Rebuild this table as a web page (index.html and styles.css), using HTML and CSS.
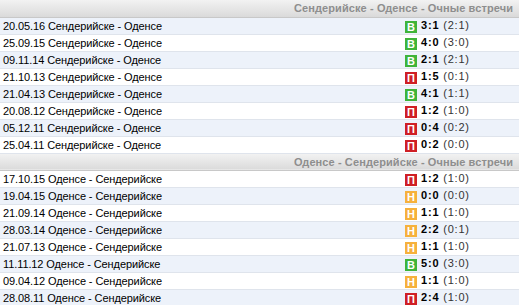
FILE: index.html
```html
<!DOCTYPE html>
<html lang="ru">
<head>
  <meta charset="UTF-8">
  <title>Очные встречи</title>
  <link rel="stylesheet" href="styles.css">
</head>
<body>
  <table class="h2h">
    <colgroup>
      <col class="h2h__col-match">
      <col class="h2h__col-result">
    </colgroup>
    <tr class="h2h__head"><th colspan="2">Сендерийске - Оденсе - Очные встречи</th></tr>
    <tr class="h2h__row is-odd"><td class="h2h__match">20.05.16 Сендерийске - Оденсе</td><td class="h2h__result"><span class="mark mark--win">В</span><b>3:1</b> (2:1)</td></tr>
    <tr class="h2h__row"><td class="h2h__match">25.09.15 Сендерийске - Оденсе</td><td class="h2h__result"><span class="mark mark--win">В</span><b>4:0</b> (3:0)</td></tr>
    <tr class="h2h__row is-odd"><td class="h2h__match">09.11.14 Сендерийске - Оденсе</td><td class="h2h__result"><span class="mark mark--win">В</span><b>2:1</b> (2:1)</td></tr>
    <tr class="h2h__row"><td class="h2h__match">21.10.13 Сендерийске - Оденсе</td><td class="h2h__result"><span class="mark mark--loss">П</span><b>1:5</b> (0:1)</td></tr>
    <tr class="h2h__row is-odd"><td class="h2h__match">21.04.13 Сендерийске - Оденсе</td><td class="h2h__result"><span class="mark mark--win">В</span><b>4:1</b> (1:1)</td></tr>
    <tr class="h2h__row"><td class="h2h__match">20.08.12 Сендерийске - Оденсе</td><td class="h2h__result"><span class="mark mark--loss">П</span><b>1:2</b> (1:0)</td></tr>
    <tr class="h2h__row is-odd"><td class="h2h__match">05.12.11 Сендерийске - Оденсе</td><td class="h2h__result"><span class="mark mark--loss">П</span><b>0:4</b> (0:2)</td></tr>
    <tr class="h2h__row"><td class="h2h__match">25.04.11 Сендерийске - Оденсе</td><td class="h2h__result"><span class="mark mark--loss">П</span><b>0:2</b> (0:0)</td></tr>
    <tr class="h2h__head"><th colspan="2">Оденсе - Сендерийске - Очные встречи</th></tr>
    <tr class="h2h__row"><td class="h2h__match">17.10.15 Оденсе - Сендерийске</td><td class="h2h__result"><span class="mark mark--loss">П</span><b>1:2</b> (1:0)</td></tr>
    <tr class="h2h__row is-odd"><td class="h2h__match">19.04.15 Оденсе - Сендерийске</td><td class="h2h__result"><span class="mark mark--draw">Н</span><b>0:0</b> (0:0)</td></tr>
    <tr class="h2h__row"><td class="h2h__match">21.09.14 Оденсе - Сендерийске</td><td class="h2h__result"><span class="mark mark--draw">Н</span><b>1:1</b> (1:0)</td></tr>
    <tr class="h2h__row is-odd"><td class="h2h__match">28.03.14 Оденсе - Сендерийске</td><td class="h2h__result"><span class="mark mark--draw">Н</span><b>2:2</b> (0:1)</td></tr>
    <tr class="h2h__row"><td class="h2h__match">21.07.13 Оденсе - Сендерийске</td><td class="h2h__result"><span class="mark mark--draw">Н</span><b>1:1</b> (1:0)</td></tr>
    <tr class="h2h__row is-odd"><td class="h2h__match">11.11.12 Оденсе - Сендерийске</td><td class="h2h__result"><span class="mark mark--win">В</span><b>5:0</b> (3:0)</td></tr>
    <tr class="h2h__row"><td class="h2h__match">09.04.12 Оденсе - Сендерийске</td><td class="h2h__result"><span class="mark mark--draw">Н</span><b>1:1</b> (1:0)</td></tr>
    <tr class="h2h__row is-odd"><td class="h2h__match">28.08.11 Оденсе - Сендерийске</td><td class="h2h__result"><span class="mark mark--loss">П</span><b>2:4</b> (1:0)</td></tr>
  </table>
</body>
</html>
```

FILE: styles.css
```css
* {
  box-sizing: border-box;
}

html,
body {
  margin: 0;
  overflow: hidden;
}

body {
  font-family: "Liberation Sans", Arial, sans-serif;
  font-size: 11px;
  color: #000;
  background: #fff;
}

.h2h {
  width: 519px;
  border-collapse: collapse;
  table-layout: fixed;
}

.h2h__col-match {
  width: 405px;
}

.h2h__col-result {
  width: 114px;
}

.h2h__head th {
  height: 17px;
  padding: 0 6px 0 0;
  text-align: right;
  font-size: 11px;
  font-weight: bold;
  letter-spacing: 0.1px;
  color: #8e8e8e;
  background: linear-gradient(#f2f2f2, #dadada);
  border-bottom: 1px solid #c8c8c8;
}

.h2h__row td {
  height: 17px;
  padding: 0;
  border-bottom: 1px solid #dfe4ec;
  white-space: nowrap;
  overflow: hidden;
}

.h2h__row.is-odd td {
  background: #edf2fa;
}

.h2h__row .h2h__match {
  padding-left: 3px;
  letter-spacing: -0.1px;
}

.h2h__result {
  color: #333;
  letter-spacing: 0.8px;
}

.h2h__result b {
  color: #000;
}

.mark {
  display: inline-block;
  width: 12px;
  height: 12px;
  margin-right: 4px;
  line-height: 12px;
  text-align: center;
  vertical-align: -2px;
  font-weight: bold;
  letter-spacing: 0;
  color: #fff;
}

.mark--win {
  background: #3fb43a;
}

.mark--loss {
  background: #cf1f25;
}

.mark--draw {
  background: #f6b13c;
}
```
